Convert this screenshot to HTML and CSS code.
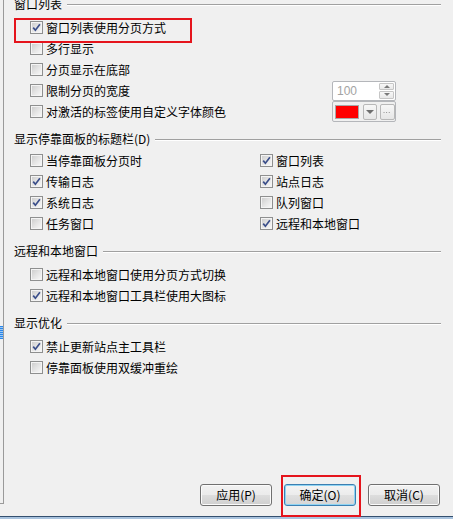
FILE: index.html
```html
<!DOCTYPE html>
<html lang="zh-CN">
<head>
<meta charset="utf-8">
<title>选项</title>
<link rel="stylesheet" href="styles.css">
</head>
<body>
<div class="window">
  <div class="main">
    <div class="side"><div class="marker"></div></div>
    <div class="content">
      <section class="group g1">
        <div class="ghead"><span class="gtitle">窗口列表</span><i class="gline"></i></div>
        <div class="rows">
          <div class="row"><span class="cb on"><svg viewBox="0 0 9 9" width="9" height="9"><path d="M1.2 4.6 L3.4 7.2 L7.9 1.3" fill="none" stroke="#3a4e8a" stroke-width="1.7"/></svg></span><span>窗口列表使用分页方式</span></div>
          <div class="row"><span class="cb"></span><span>多行显示</span></div>
          <div class="row"><span class="cb"></span><span>分页显示在底部</span></div>
          <div class="row ctlrow">
            <div class="opt"><span class="cb"></span><span>限制分页的宽度</span></div>
            <div class="spin">
              <span class="spinval">100</span>
              <span class="spinbtns"><span class="sbtn"><i class="tri-up"></i></span><span class="sbtn"><i class="tri-down"></i></span></span>
            </div>
          </div>
          <div class="row ctlrow">
            <div class="opt"><span class="cb"></span><span>对激活的标签使用自定义字体颜色</span></div>
            <div class="colorpick">
              <span class="swatch"></span>
              <span class="minibtn dd"><i class="tri-dd"></i></span>
              <span class="minibtn dots"><svg viewBox="0 0 15 14" width="13" height="14"><rect x="3" y="7" width="1" height="1" fill="#777"/><rect x="6" y="7" width="1" height="1" fill="#777"/><rect x="9" y="7" width="1" height="1" fill="#777"/></svg></span>
            </div>
          </div>
        </div>
      </section>

      <section class="group g2">
        <div class="ghead"><span class="gtitle">显示停靠面板的标题栏(D)</span><i class="gline"></i></div>
        <div class="rows two">
          <div class="row"><span class="cb"></span><span>当停靠面板分页时</span></div>
          <div class="row"><span class="cb on"><svg viewBox="0 0 9 9" width="9" height="9"><path d="M1.2 4.6 L3.4 7.2 L7.9 1.3" fill="none" stroke="#3a4e8a" stroke-width="1.7"/></svg></span><span>窗口列表</span></div>
          <div class="row"><span class="cb on"><svg viewBox="0 0 9 9" width="9" height="9"><path d="M1.2 4.6 L3.4 7.2 L7.9 1.3" fill="none" stroke="#3a4e8a" stroke-width="1.7"/></svg></span><span>传输日志</span></div>
          <div class="row"><span class="cb on"><svg viewBox="0 0 9 9" width="9" height="9"><path d="M1.2 4.6 L3.4 7.2 L7.9 1.3" fill="none" stroke="#3a4e8a" stroke-width="1.7"/></svg></span><span>站点日志</span></div>
          <div class="row"><span class="cb on"><svg viewBox="0 0 9 9" width="9" height="9"><path d="M1.2 4.6 L3.4 7.2 L7.9 1.3" fill="none" stroke="#3a4e8a" stroke-width="1.7"/></svg></span><span>系统日志</span></div>
          <div class="row"><span class="cb"></span><span>队列窗口</span></div>
          <div class="row"><span class="cb"></span><span>任务窗口</span></div>
          <div class="row"><span class="cb on"><svg viewBox="0 0 9 9" width="9" height="9"><path d="M1.2 4.6 L3.4 7.2 L7.9 1.3" fill="none" stroke="#3a4e8a" stroke-width="1.7"/></svg></span><span>远程和本地窗口</span></div>
        </div>
      </section>

      <section class="group g3">
        <div class="ghead"><span class="gtitle">远程和本地窗口</span><i class="gline"></i></div>
        <div class="rows">
          <div class="row"><span class="cb"></span><span>远程和本地窗口使用分页方式切换</span></div>
          <div class="row"><span class="cb on"><svg viewBox="0 0 9 9" width="9" height="9"><path d="M1.2 4.6 L3.4 7.2 L7.9 1.3" fill="none" stroke="#3a4e8a" stroke-width="1.7"/></svg></span><span>远程和本地窗口工具栏使用大图标</span></div>
        </div>
      </section>

      <section class="group g4">
        <div class="ghead"><span class="gtitle">显示优化</span><i class="gline"></i></div>
        <div class="rows">
          <div class="row"><span class="cb on"><svg viewBox="0 0 9 9" width="9" height="9"><path d="M1.2 4.6 L3.4 7.2 L7.9 1.3" fill="none" stroke="#3a4e8a" stroke-width="1.7"/></svg></span><span>禁止更新站点主工具栏</span></div>
          <div class="row"><span class="cb"></span><span>停靠面板使用双缓冲重绘</span></div>
        </div>
      </section>

      <div class="spacer"></div>

      <div class="buttons">
        <button class="btn">应用(P)</button>
        <button class="btn default">确定(O)</button>
        <button class="btn">取消(C)</button>
      </div>
    </div>
  </div>
  <div class="statusline"></div>
  <div class="annot annot-top"></div>
  <div class="annot annot-ok"></div>
</div>
</body>
</html>
```

FILE: styles.css
```css
* { box-sizing: border-box; }
html, body {
  margin: 0;
  padding: 0;
  width: 453px;
  height: 519px;
  overflow: hidden;
  background: #f0f0f0;
}
body {
  font-family: "Noto Sans CJK SC", "Microsoft YaHei", sans-serif;
  font-size: 12px;
  line-height: 16px;
  color: #000;
}
.window {
  position: relative;
  width: 453px;
  height: 519px;
  display: flex;
  flex-direction: column;
}
.main {
  flex: 1;
  display: flex;
  min-height: 0;
}
.side {
  width: 4px;
  height: 504px;
  border-right: 1px solid #9a9a9a;
  border-bottom: 1px solid #9a9a9a;
  align-self: flex-start;
  display: flex;
  flex-direction: column;
}
.marker {
  margin-top: 326px;
  width: 3px;
  height: 13px;
  background: repeating-linear-gradient(to bottom, #2a86ea 0 1px, #9cc8f3 1px 2px);
}
.content {
  flex: 1;
  min-width: 0;
  display: flex;
  flex-direction: column;
  padding: 0 12px 0 10px;
}
.group { margin-bottom: 9px; }
.g1 { margin-top: -4px; }
.ghead {
  height: 16px;
  display: flex;
  align-items: center;
  gap: 5px;
}
.gtitle { white-space: nowrap; }
.gline {
  flex: 1;
  height: 2px;
  border-top: 1px solid #a0a0a0;
  border-bottom: 1px solid #ffffff;
  margin-top: 1px;
}
.rows {
  margin-top: 5px;
  margin-left: 16px;
}
.g2 .rows { margin-top: 3px; }
.rows.two {
  display: grid;
  grid-template-columns: 230px 1fr;
}
.row, .opt {
  height: 21px;
  display: flex;
  align-items: center;
  white-space: nowrap;
}
.ctlrow {
  display: grid;
  grid-template-columns: 302px 64px;
  align-items: center;
}
.cb {
  width: 13px;
  height: 13px;
  flex: none;
  margin-right: 3px;
  border: 1px solid #8e8f8f;
  background: #f4f4f4;
  box-shadow: inset 0 0 0 1px #f4f4f4;
  display: flex;
  align-items: center;
  justify-content: center;
  position: relative;
}
.cb::before {
  content: "";
  position: absolute;
  left: 1px; top: 1px; right: 1px; bottom: 1px;
  background: linear-gradient(135deg, #cfcfcf 0%, #e4e4e4 50%, #f6f6f6 100%);
}
.cb svg { position: relative; }

.spin {
  width: 64px;
  height: 20px;
  border: 1px solid #b4b6ba;
  border-radius: 2px;
  background: #fff;
  display: flex;
  align-items: center;
  padding: 1px;
}
.spinval {
  flex: 1;
  padding-left: 3px;
  color: #a3a3a3;
  font-family: "Liberation Sans", sans-serif;
  font-size: 12px;
}
.spinbtns {
  width: 15px;
  height: 16px;
  display: flex;
  flex-direction: column;
  gap: 1px;
  margin-right: 0;
}
.sbtn {
  flex: 1;
  border: 1px solid #c6c6c6;
  border-radius: 1px;
  background: linear-gradient(#f8f8f8, #e8e8e8);
  display: flex;
  align-items: center;
  justify-content: center;
}
.tri-up {
  width: 0; height: 0;
  border-left: 3px solid transparent;
  border-right: 3px solid transparent;
  border-bottom: 3px solid #7a7a7a;
}
.tri-down {
  width: 0; height: 0;
  border-left: 3px solid transparent;
  border-right: 3px solid transparent;
  border-top: 3px solid #7a7a7a;
}
.colorpick {
  width: 64px;
  height: 21px;
  border: 1px solid #b4b6ba;
  border-radius: 2px;
  background: #f0f0f0;
  display: flex;
  align-items: center;
  padding-left: 2px;
}
.swatch {
  width: 24px;
  height: 14px;
  background: #ff0000;
  border: 1px solid #a8a8a8;
}
.minibtn {
  height: 16px;
  border: 1px solid #b8b8b8;
  border-radius: 2px;
  background: linear-gradient(#f7f7f7, #e6e6e6);
  display: flex;
  align-items: center;
  justify-content: center;
}
.dd { width: 14px; margin-left: 4px; }
.dots { width: 15px; margin-left: 3px; }
.tri-dd {
  width: 0; height: 0;
  border-left: 4px solid transparent;
  border-right: 4px solid transparent;
  border-top: 4px solid #6e6e6e;
}

.spacer { flex: 1; }
.buttons {
  display: flex;
  justify-content: flex-end;
  gap: 12px;
  margin-right: 1px;
  margin-bottom: 10px;
}
.btn {
  width: 72px;
  height: 22px;
  padding: 0;
  font-family: "Noto Sans CJK SC", "Microsoft YaHei", sans-serif;
  font-size: 12px;
  line-height: 16px;
  color: #000;
  border: 1px solid #707070;
  border-radius: 3px;
  background: linear-gradient(#f2f2f2 0%, #ebebeb 50%, #dddddd 51%, #cfcfcf 100%);
  box-shadow: inset 0 0 0 1px #fbfbfb;
}
.btn.default {
  border-color: #3c7fb1;
  box-shadow: inset 0 0 0 1px #8fd4f3;
  background: linear-gradient(#f4f4f4 0%, #ececec 50%, #e0e0e0 51%, #d6d6d6 100%);
}
.statusline {
  height: 3px;
  border-top: 1px solid #34506f;
  background: #a9c3de;
}
.annot {
  position: absolute;
  border: 2px solid #e5141c;
}
.annot-top { left: 14px; top: 18px; width: 178px; height: 25px; }
.annot-ok { left: 281px; top: 475px; width: 80px; height: 42px; }
```
